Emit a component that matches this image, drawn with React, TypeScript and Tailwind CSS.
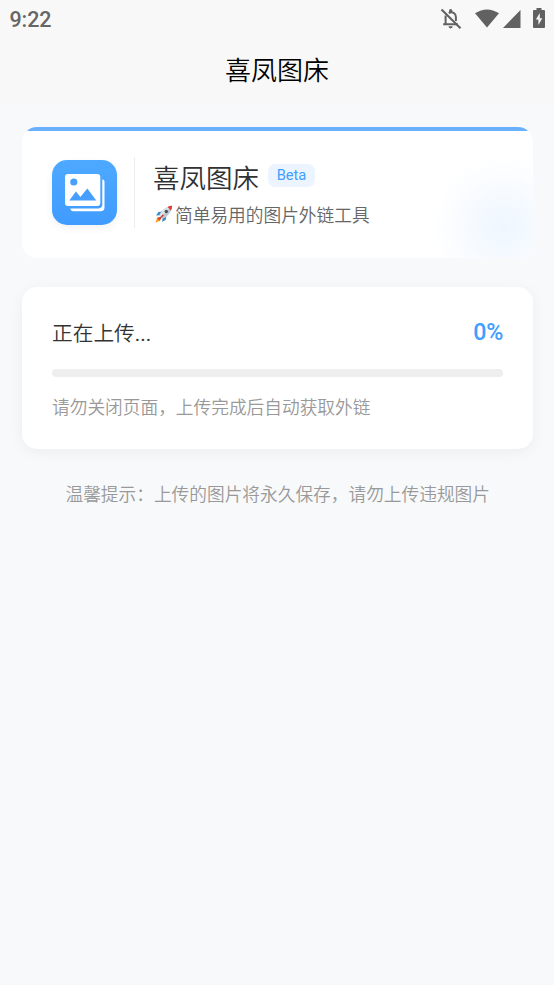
import React from "react";

function StatusBar() {
  return (
    <div className="flex h-[38px] items-center justify-between pl-[9.5px] pr-[9px] text-[#666666]">
      <span className="pt-[2px] font-[Roboto,sans-serif] text-[21.5px] font-medium leading-[38px] tracking-[-0.1px]">9:22</span>
      <div className="flex h-full items-center">
        <svg className="mr-[13px]" width="22" height="22" viewBox="0 0 22 22" fill="none" stroke="#616161">
          <path d="M5.600 7.500v8.300M3.200 16.200h14.600M8.800 5.200C12.200 3 15.900 5.500 15.900 9V13" strokeWidth="2" />
          <path d="M1.500 1.500L20.500 20.200" strokeWidth="2.100" />
          <path d="M9.100 4.800V2.500a1.600 1.600 0 0 1 3.200 0v2.300zM8.500 18.300h4.200a2.100 2.100 0 0 1-4.200 0z" fill="#616161" stroke="none" />
        </svg>
        <svg className="-mt-[2px] mr-[4px]" width="24" height="19" viewBox="0 0 24 19" fill="#616161">
          <path d="M0 4.200Q12-3.400 24 4.200L12 18.500z" />
        </svg>
        <svg className="mr-[12px]" width="18" height="18" viewBox="0 0 18 18" fill="#616161">
          <path d="M17.500 0v18H0z" />
        </svg>
        <svg className="-mt-[2px]" width="12" height="20" viewBox="0 0 12 20">
          <path d="M3.500 0h5v2H11a1 1 0 0 1 1 1v16a1 1 0 0 1-1 1H1a1 1 0 0 1-1-1V3a1 1 0 0 1 1-1h2.500z" fill="#616161" />
          <path d="M6.800 5L2.900 11.600h2.500V17L9.300 10.200H6.800z" fill="#f8f8f8" />
        </svg>
      </div>
    </div>
  );
}

function GalleryIcon() {
  return (
    <svg width="41" height="38" viewBox="0 0 41 38">
      <rect x="0" y="0" width="35.300" height="32" rx="3" fill="#fff" />
      <path d="M37.300 5.500c1.500 0 2.200.8 2.200 2.200v25.600a4 4 0 0 1-4 4H9.500c-2.300 0-3.900-.8-4.200-2.900h28.200a3.800 3.800 0 0 0 3.800-3.800z" fill="#fff" />
      <circle cx="8.800" cy="8" r="3.600" fill="#489ffd" />
      <path d="M4.300 26.500l6.600-9.100 4.500 5.700 6.900-8.700 9 12.100z" fill="#469efe" />
    </svg>
  );
}

function Rocket() {
  return (
    <svg width="18" height="18" viewBox="0 0 18 18" className="mr-[2px] mt-px shrink-0">
      <path d="M.4 17.700l1.800-5.300 3.200 3.200z" fill="#f6a21b" />
      <path d="M1.800 13l2.400-1.300 2 2.100-1.700 2.300z" fill="#ef5b2b" />
      <path d="M7.300 6.600L3.400 7 1.100 10.400l4-.2zM11.200 10.800l-.4 4-3.600 2.300.4-4.200z" fill="#2e8fc9" />
      <path d="M4.300 10.700C6 5.600 10.400 1.500 17.200.7c-.6 6.500-4.700 11.200-10 13.100z" fill="#bdc9d0" />
      <path d="M4.300 10.700C6 5.600 10.400 1.500 17.200.7L5.800 12.300z" fill="#dce4e8" />
      <path d="M12.500 1.900c1.500-.7 3-1.100 4.700-1.200-.1 1.700-.5 3.300-1.200 4.700z" fill="#e53935" />
      <circle cx="11.300" cy="6.500" r="1.700" fill="#45535c" />
      <path d="M8.400 9.700l-4.200 4.600" stroke="#c83b32" strokeWidth="1.300" />
    </svg>
  );
}

function BrandCard() {
  return (
    <section className="relative h-[131px] overflow-hidden rounded-[15px] bg-white">
      <div className="absolute inset-x-0 top-0 h-[4px] bg-[#69b1ff]" />
      <div className="absolute -bottom-[43px] -right-[45px] size-[148px] rounded-full [background:radial-gradient(circle_closest-side,#eef6ff_0%,rgba(238,246,255,0)_96%)]" />
      <div className="relative flex h-full items-center pl-[30px]">
        <div className="flex size-[65px] items-center justify-center rounded-[15px] bg-linear-to-b from-[#4da9ff] to-[#409bff] pl-[1px] pt-px shadow-[0_3px_9px_rgba(0,0,0,0.06)]">
          <GalleryIcon />
        </div>
        <div className="ml-[17px] h-[71px] w-px bg-[#eeeeee]" />
        <div className="ml-[18px] flex flex-col">
          <div className="flex h-[38px] items-center">
            <h2 className="text-[26.5px] font-[350] leading-[38px] text-[#303133]">喜凤图床</h2>
            <span className="-mt-[2px] ml-[9px] flex h-[23px] w-[47px] items-center justify-center rounded-[7px] bg-[#ecf5ff] font-[Roboto,sans-serif] text-[14.7px] font-normal text-[#409eff]">Beta</span>
          </div>
          <div className="mt-[4px] flex h-[28px] items-center pl-[2px] text-[17.7px] leading-[28px] text-[#666666]">
            <Rocket />
            <span>简单易用的图片外链工具</span>
          </div>
        </div>
      </div>
    </section>
  );
}

function UploadCard() {
  return (
    <section className="mt-[29px] h-[162px] rounded-[15px] bg-white px-[30px] pt-[30px] shadow-[0_3px_15px_rgba(0,0,0,0.05)]">
      <div className="flex h-[30px] items-center justify-between">
        <span className="pt-[2px] text-[20.7px] leading-[30px] text-[#333333]">正在上传<span className="font-[Roboto,sans-serif] font-normal">...</span></span>
        <span className="font-[Roboto,sans-serif] text-[23.2px] font-medium leading-[30px] text-[#409eff]">0%</span>
      </div>
      <div className="mt-[22px] h-[8px] rounded-full bg-[#eeeeee]" />
      <p className="mt-[16px] text-[17.7px] leading-[26px] text-[#999999]">请勿关闭页面，上传完成后自动获取外链</p>
    </section>
  );
}

export default function App() {
  return (
    <div className="min-h-[985px] w-full bg-[#f8f9fb] font-['Noto_Sans_CJK_SC',sans-serif] font-[350]">
      <header className="h-[105px] bg-[#f8f8f8]">
        <StatusBar />
        <h1 className="text-center text-[26px] font-[350] leading-[62px] text-black">喜凤图床</h1>
      </header>
      <main className="pl-[22px] pr-[20.6px] pt-[22px]">
        <BrandCard />
        <UploadCard />
        <p className="mt-[31px] whitespace-nowrap text-center text-[17.7px] leading-[26px] text-[#999999]">温馨提示：上传的图片将永久保存，请勿上传违规图片</p>
      </main>
    </div>
  );
}
